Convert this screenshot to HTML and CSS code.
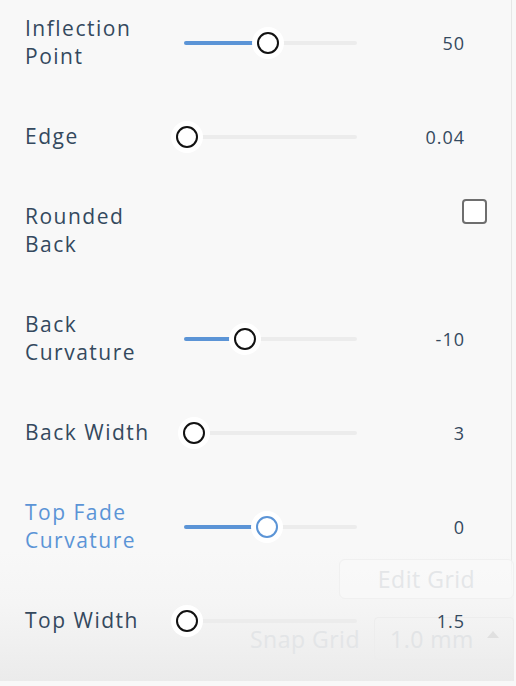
FILE: index.html
```html
<!DOCTYPE html>
<html>
<head>
<meta charset="utf-8">
<link rel="stylesheet" href="styles.css">
</head>
<body>
<div class="panel">
  <div class="rows">
    <div class="row">
      <div class="label">Inflection Point</div>
      <div class="slider"><div class="track"><div class="fill" style="width:48.6%"></div><div class="thumb" style="left:48.6%"></div></div></div>
      <div class="value">50</div>
    </div>
    <div class="row">
      <div class="label">Edge</div>
      <div class="slider"><div class="track"><div class="fill" style="width:2%"></div><div class="thumb" style="left:2%"></div></div></div>
      <div class="value">0.04</div>
    </div>
    <div class="row row-check">
      <div class="label">Rounded Back</div>
      <div class="checkbox"></div>
    </div>
    <div class="row">
      <div class="label">Back Curvature</div>
      <div class="slider"><div class="track"><div class="fill" style="width:35.3%"></div><div class="thumb" style="left:35.3%"></div></div></div>
      <div class="value">-10</div>
    </div>
    <div class="row">
      <div class="label">Back Width</div>
      <div class="slider"><div class="track"><div class="fill" style="width:5.8%"></div><div class="thumb" style="left:5.8%"></div></div></div>
      <div class="value">3</div>
    </div>
    <div class="row focused">
      <div class="label">Top Fade Curvature</div>
      <div class="slider"><div class="track"><div class="fill" style="width:48%"></div><div class="thumb" style="left:48%"></div></div></div>
      <div class="value">0</div>
    </div>
    <div class="row">
      <div class="label">Top Width</div>
      <div class="slider"><div class="track"><div class="fill" style="width:2%"></div><div class="thumb" style="left:2%"></div></div></div>
      <div class="value">1.5</div>
    </div>
  </div>
  <div class="ghost">
    <div class="ghost-btn">Edit Grid</div>
    <div class="ghost-snap">
      <span class="ghost-label">Snap Grid</span>
      <div class="ghost-select"><span>1.0 mm</span><span class="caret"></span></div>
    </div>
  </div>
</div>
</body>
</html>
```

FILE: styles.css
```css
html, body {
  margin: 0;
  padding: 0;
  background: #f8f8f8;
  height: 100%;
  overflow: hidden;
}
body {
  font-family: "Open Sans", "Noto Sans", sans-serif;
}
.panel {
  position: relative;
  width: 511px;
  height: 686px;
  border-right: 1px solid #e6e6e6;
  background: #f8f8f8;
  overflow: visible;
}
.rows {
  position: relative;
  z-index: 1;
  margin-top: -5px;
}
.row {
  display: grid;
  grid-template-columns: 159px 173px 1fr;
  align-items: center;
  height: 94px;
  padding: 0 46px 0 25px;
}
.label {
  font-size: 21px;
  line-height: 28px;
  letter-spacing: 1.5px;
  color: #34495e;
  width: 145px;
}
.focused .label {
  color: #5b94d6;
}
.slider {
  height: 28px;
  margin-top: 2px;
  display: flex;
  align-items: center;
}
.track {
  position: relative;
  width: 100%;
  height: 4px;
  border-radius: 2px;
  background: #ececec;
}
.fill {
  position: absolute;
  left: 0;
  top: 0;
  height: 4px;
  border-radius: 2px;
  background: #5b94d6;
}
.thumb {
  position: absolute;
  top: 50%;
  width: 22px;
  height: 22px;
  box-sizing: border-box;
  border: 2px solid #111;
  border-radius: 50%;
  background: #fff;
  box-shadow: 0 0 0 5px #fff;
  transform: translate(-50%, -50%);
}
.focused .thumb {
  border-color: #5b94d6;
}
.value {
  text-align: right;
  font-size: 18px;
  letter-spacing: 1px;
  margin-top: 2px;
  color: #34495e;
}
.row-check {
  display: flex;
  justify-content: space-between;
  align-items: flex-start;
  height: 108px;
  padding: 0 24px 0 25px;
  box-sizing: border-box;
}
.row-check .label {
  margin-top: 19px;
}
.checkbox {
  margin-top: 16px;
  width: 25px;
  height: 25px;
  box-sizing: border-box;
  border: 2px solid #6e6e6e;
  border-radius: 4px;
  background: #fff;
}
.ghost {
  position: absolute;
  z-index: 0;
  left: 0;
  right: -3px;
  bottom: 0;
  height: 130px;
  background: linear-gradient(to bottom, rgba(248,248,248,0) 0%, #f5f5f5 40%, #ebebeb 100%);
  display: flex;
  flex-direction: column;
  align-items: flex-end;
}
.ghost-btn {
  margin-top: 8px;
  width: 175px;
  height: 40px;
  box-sizing: border-box;
  border: 1px solid #f0f0f0;
  border-radius: 6px;
  background: rgba(250,250,250,0.6);
  color: #e4e6e8;
  font-size: 23px;
  display: flex;
  align-items: center;
  justify-content: center;
  letter-spacing: 0.5px;
}
.ghost-snap {
  margin-top: 18px;
  display: flex;
  align-items: center;
  gap: 14px;
}
.ghost-label {
  color: #e3e5e7;
  font-size: 23px;
  letter-spacing: 0.5px;
}
.ghost-select {
  width: 140px;
  height: 43px;
  box-sizing: border-box;
  border: 1px solid #ededed;
  border-radius: 4px;
  display: flex;
  align-items: center;
  padding-left: 15px;
  gap: 13px;
  color: #e2e4e6;
  font-size: 23px;
  letter-spacing: 0.5px;
}
.caret {
  width: 0;
  height: 0;
  border-left: 6px solid transparent;
  border-right: 6px solid transparent;
  border-bottom: 7px solid #e0e0e0;
  margin-top: -8px;
}
```
